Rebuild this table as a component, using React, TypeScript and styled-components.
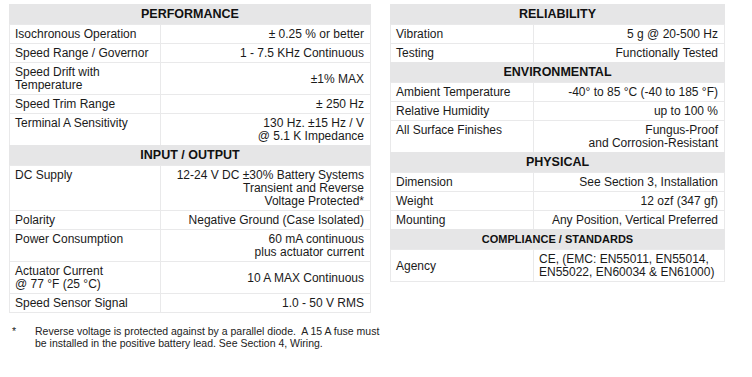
import React from "react";
import styled, { createGlobalStyle } from "styled-components";

type Row = {
  label: React.ReactNode;
  value: React.ReactNode;
  labelMiddle?: boolean;
  valueLeft?: boolean;
};

type Section = { title: string; small?: boolean; rows: Row[] };

const leftSections: Section[] = [
  {
    title: "PERFORMANCE",
    rows: [
      { label: "Isochronous Operation", value: "± 0.25 % or better" },
      { label: "Speed Range / Governor", value: "1 - 7.5 KHz Continuous" },
      {
        label: (
          <>
            Speed Drift with
            <br />
            Temperature
          </>
        ),
        value: "±1% MAX",
      },
      { label: "Speed Trim Range", value: "± 250 Hz" },
      {
        label: "Terminal A Sensitivity",
        value: (
          <>
            130 Hz. ±15 Hz / V
            <br />@ 5.1 K Impedance
          </>
        ),
      },
    ],
  },
  {
    title: "INPUT / OUTPUT",
    rows: [
      {
        label: "DC Supply",
        value: (
          <>
            12-24 V DC ±30% Battery Systems
            <br />
            Transient and Reverse
            <br />
            Voltage Protected*
          </>
        ),
      },
      { label: "Polarity", value: "Negative Ground (Case Isolated)" },
      {
        label: "Power Consumption",
        value: (
          <>
            60 mA continuous
            <br />
            plus actuator current
          </>
        ),
      },
      {
        label: (
          <>
            Actuator Current
            <br />@ 77 °F (25 °C)
          </>
        ),
        value: "10 A MAX Continuous",
      },
      { label: "Speed Sensor Signal", value: "1.0 - 50 V RMS" },
    ],
  },
];

const rightSections: Section[] = [
  {
    title: "RELIABILITY",
    rows: [
      { label: "Vibration", value: "5 g @ 20-500 Hz" },
      { label: "Testing", value: "Functionally Tested" },
    ],
  },
  {
    title: "ENVIRONMENTAL",
    rows: [
      { label: "Ambient Temperature", value: "-40° to 85 °C (-40 to 185 °F)" },
      { label: "Relative Humidity", value: "up to 100 %" },
      {
        label: "All Surface Finishes",
        value: (
          <>
            Fungus-Proof
            <br />
            and Corrosion-Resistant
          </>
        ),
      },
    ],
  },
  {
    title: "PHYSICAL",
    rows: [
      { label: "Dimension", value: "See Section 3, Installation" },
      { label: "Weight", value: "12 ozf (347 gf)" },
      { label: "Mounting", value: "Any Position, Vertical Preferred" },
    ],
  },
  {
    title: "COMPLIANCE / STANDARDS",
    small: true,
    rows: [
      {
        label: "Agency",
        labelMiddle: true,
        valueLeft: true,
        value: (
          <>
            CE, (EMC: EN55011, EN55014,
            <br />
            EN55022, EN60034 &amp; EN61000)
          </>
        ),
      },
    ],
  },
];

function SpecTable({
  sections,
  labelWidth,
}: {
  sections: Section[];
  labelWidth: number;
}) {
  return (
    <Table $labelWidth={labelWidth}>
      {sections.map((s) => (
        <React.Fragment key={s.title}>
          <Header $small={s.small}>{s.title}</Header>
          {s.rows.map((r, i) => (
            <React.Fragment key={i}>
              <Label $middle={r.labelMiddle}>{r.label}</Label>
              <Value $left={r.valueLeft}>{r.value}</Value>
            </React.Fragment>
          ))}
        </React.Fragment>
      ))}
    </Table>
  );
}

export default function App() {
  return (
    <>
      <GlobalStyle />
      <Page>
        <Column $width={362}>
          <SpecTable sections={leftSections} labelWidth={150} />
          <Footnote>
            <Star>*</Star>
            <NoteText>
              Reverse voltage is protected against by a parallel diode.&nbsp; A
              15 A fuse must
              <br />
              be installed in the positive battery lead. See Section 4, Wiring.
            </NoteText>
          </Footnote>
        </Column>
        <Column $width={335}>
          <SpecTable sections={rightSections} labelWidth={142} />
        </Column>
      </Page>
    </>
  );
}

const GlobalStyle = createGlobalStyle`
  html, body {
    margin: 0;
    padding: 0;
    background: #ffffff;
  }
  body {
    font-family: "Liberation Sans", Arial, sans-serif;
    color: #1a1a1a;
  }
`;

const Page = styled.div`
  display: flex;
  align-items: flex-start;
  gap: 19px;
  padding: 4px 0 0 9px;
`;

const Column = styled.div<{ $width: number }>`
  width: ${(p) => p.$width}px;
  flex: none;
  display: flex;
  flex-direction: column;
`;

const Table = styled.div<{ $labelWidth: number }>`
  box-sizing: border-box;
  display: grid;
  grid-template-columns: ${(p) => p.$labelWidth}px 1fr;
  gap: 1px;
  padding: 1px;
  background: #e9e9ea;
`;

const Header = styled.div<{ $small?: boolean }>`
  grid-column: 1 / -1;
  margin: -1px -1px 0;
  height: 20px;
  line-height: 21px;
  text-align: center;
  font-weight: bold;
  font-size: ${(p) => (p.$small ? "11px" : "12.5px")};
  color: #111;
  background: #e6e6e7;
`;

const Cell = styled.div`
  background: #ffffff;
  font-size: 12px;
  line-height: 13px;
  padding: 3px 6px 2px 5px;
  display: flex;
  flex-direction: column;
  white-space: nowrap;
`;

const Label = styled(Cell)<{ $middle?: boolean }>`
  justify-content: ${(p) => (p.$middle ? "center" : "flex-start")};
`;

const Value = styled(Cell)<{ $left?: boolean }>`
  justify-content: center;
  text-align: ${(p) => (p.$left ? "left" : "right")};
`;

const Footnote = styled.div`
  display: flex;
  margin-top: 13px;
  font-size: 10.5px;
  line-height: 11.5px;
  color: #222;
`;

const Star = styled.span`
  width: 26px;
  flex: none;
  padding-left: 3px;
  box-sizing: border-box;
`;

const NoteText = styled.span`
  white-space: nowrap;
`;
